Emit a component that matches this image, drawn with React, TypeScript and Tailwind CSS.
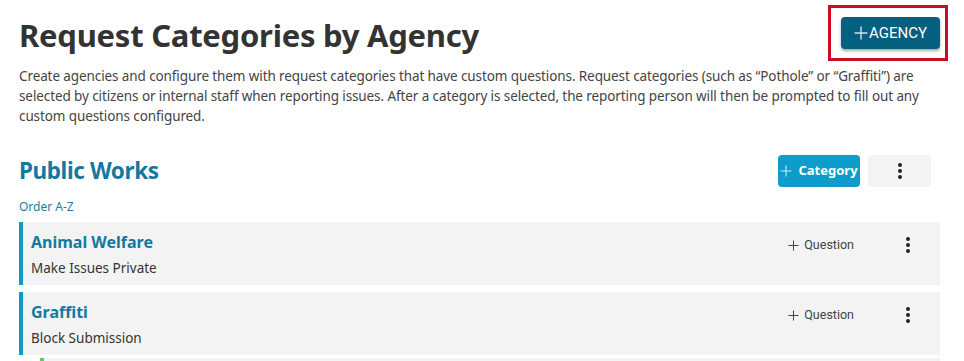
import React from "react";

function Kebab() {
  return (
    <svg width="4" height="16" viewBox="0 0 4 16" className="block">
      <circle cx="2" cy="2" r="2" fill="#222" />
      <circle cx="2" cy="8" r="2" fill="#222" />
      <circle cx="2" cy="14" r="2" fill="#222" />
    </svg>
  );
}

function Plus({ size = 12, stroke = "currentColor", width = 1.3 }: { size?: number; stroke?: string; width?: number }) {
  return (
    <svg width={size} height={size} viewBox="0 0 12 12" className="block">
      <path d="M6 0.5V11.5M0.5 6H11.5" stroke={stroke} strokeWidth={width} />
    </svg>
  );
}

const categories = [
  { name: "Animal Welfare", note: "Make Issues Private" },
  { name: "Graffiti", note: "Block Submission" },
];

export default function App() {
  return (
    <div className="relative w-[964px] h-[361px] overflow-hidden bg-white pl-[19px] pr-[24px] font-['Noto_Sans',sans-serif] text-[#333]">
      {/* header */}
      <div className="flex items-start justify-between pt-[13px]">
        <h1 className="text-[31px] font-bold leading-[44px] text-[#333] tracking-[-0.25px]">
          Request Categories by Agency
        </h1>
        <button className="mt-[4px] flex items-center h-[32px] w-[99px] justify-center gap-[1px] rounded-[4px] bg-[#05607f] text-white font-['Roboto',sans-serif] text-[15px] shadow-[0_2px_3px_rgba(0,0,0,0.35)]">
          <Plus size={14} width={1.2} stroke="#cfe0e7" />
          <span>AGENCY</span>
        </button>
      </div>
      {/* annotation box */}
      <div className="absolute left-[828px] top-[5px] w-[120px] h-[56px] border-[3px] border-[#cc0a24]" />

      <p className="mt-[9px] text-[13.5px] leading-[20px] text-[#444] tracking-[-0.1px]">
        Create agencies and configure them with request categories that have custom questions. Request categories (such as “Pothole” or “Graffiti”) are selected by citizens or internal staff when reporting issues. After a category is selected, the reporting person will then be prompted to fill out any custom questions configured.
      </p>

      {/* agency section */}
      <div className="mt-[29px] flex items-center justify-between pr-[9px]">
        <h2 className="text-[22.5px] font-bold leading-[32px] text-[#1479a0] tracking-[-0.4px]">Public Works</h2>
        <div className="flex items-center gap-[8px]">
          <button className="flex items-center gap-[6px] h-[32px] w-[82px] justify-center rounded-[4px] bg-[#0c9dcb] text-white text-[13px] font-bold">
            <Plus size={12} width={1.1} stroke="#cdeaf4" />
            <span>Category</span>
          </button>
          <button className="flex items-center justify-center h-[32px] w-[63px] rounded-[4px] bg-[#f3f3f3]">
            <Kebab />
          </button>
        </div>
      </div>

      <div className="mt-[12px] text-[12px] leading-[16px] text-[#1b7ca3]">Order A-Z</div>

      <div className="mt-[7px] flex flex-col gap-[7px]">
        {categories.map((c) => (
          <div key={c.name} className="flex h-[63px] bg-[#f3f3f3] border-l-[4px] border-[#0d9ac9] pl-[8px]">
            <div className="flex-1 pt-[8px]">
              <div className="text-[16px] font-bold leading-[24px] text-[#1479a0]">{c.name}</div>
              <div className="mt-[4px] text-[13.5px] leading-[20px] text-[#333]">{c.note}</div>
            </div>
            <div className="flex items-start pt-[15px]">
              <div className="flex items-center gap-[5px] text-[12.5px] leading-[16px] text-[#444] font-['Roboto',sans-serif]">
                <Plus size={11} width={1.1} stroke="#444" />
                <span>Question</span>
              </div>
              <div className="ml-[52px] mr-[30px]">
                <Kebab />
              </div>
            </div>
          </div>
        ))}
        <div className="-mt-[4px] ml-[21px] h-[20px] bg-[#f3f3f3] border-l-[4px] border-[#5ccf57]" />
      </div>
    </div>
  );
}
